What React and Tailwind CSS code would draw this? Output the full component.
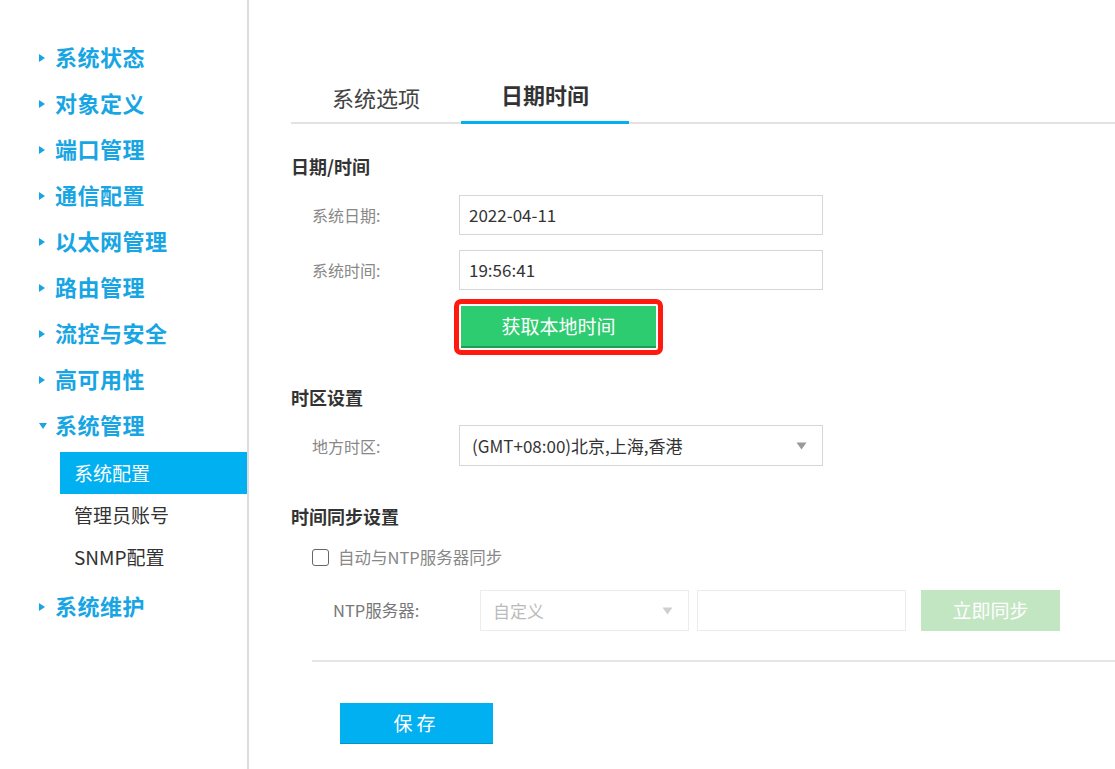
import React from "react";

const FONT = { fontFamily: '"Noto Sans CJK SC", "Noto Sans", sans-serif' };

function Tri({ down }) {
  return down ? (
    <svg width="10" height="8" viewBox="0 0 10 8" className="shrink-0">
      <path d="M1 1 L9 1 L5 7 Z" fill="#18a5e3" />
    </svg>
  ) : (
    <svg width="8" height="10" viewBox="0 0 8 10" className="shrink-0">
      <path d="M1 1 L7 5 L1 9 Z" fill="#18a5e3" />
    </svg>
  );
}

function MenuItem({ label, down }) {
  return (
    <div className="h-[46px] flex items-center pl-[38px]">
      <div className="w-[17px] flex items-center"><Tri down={down} /></div>
      <span className="text-[22px] leading-[26px] pb-[4px] font-bold text-[#18a5e3] tracking-[0.5px]">{label}</span>
    </div>
  );
}

function Arrow({ color }) {
  return (
    <svg width="11" height="8" viewBox="0 0 11 8">
      <path d="M0.5 0.5 L10.5 0.5 L5.5 7.5 Z" fill={color} />
    </svg>
  );
}

export default function App() {
  return (
    <div className="flex w-[1115px] h-[769px] bg-white overflow-hidden" style={FONT}>
      {/* Sidebar */}
      <aside className="w-[249px] shrink-0 border-r-2 border-[#dcdcdc] pt-[35px]">
        <MenuItem label="系统状态" />
        <MenuItem label="对象定义" />
        <MenuItem label="端口管理" />
        <MenuItem label="通信配置" />
        <MenuItem label="以太网管理" />
        <MenuItem label="路由管理" />
        <MenuItem label="流控与安全" />
        <MenuItem label="高可用性" />
        <MenuItem label="系统管理" down />
        <div className="pl-[60px] mt-[3px]">
          <div className="h-[42px] bg-[#00b0f0] flex items-center pl-[14px] text-[19px] text-white">系统配置</div>
          <div className="h-[42px] flex items-center pl-[14px] text-[19px] text-[#333]">管理员账号</div>
          <div className="h-[42px] flex items-center pl-[14px] text-[19px] text-[#333]">SNMP配置</div>
        </div>
        <div className="mt-[6px]">
          <MenuItem label="系统维护" />
        </div>
      </aside>

      {/* Main */}
      <main className="flex-1 pl-[42px]">
        <div className="mt-[72px] h-[52px] flex items-end border-b-2 border-[#e2e2e2]">
          <div className="w-[170px] h-[50px] flex items-center justify-center pb-[4px] text-[22px] text-[#444] -mb-[2px]">系统选项</div>
          <div className="w-[168px] h-[50px] flex items-center justify-center pb-[6px] text-[22px] font-semibold text-[#333] border-b-[3px] border-[#00b0f0] -mb-[2px]">日期时间</div>
        </div>

        <div className="mt-[30px] h-[24px] leading-[24px] text-[18px] font-bold text-[#333]">日期/时间</div>

        <div className="mt-[17px] flex items-center pl-[21px]">
          <div className="w-[147px] text-[16px] text-[#888]">系统日期:</div>
          <div className="w-[364px] h-[40px] border border-[#d6d6d6] flex items-center pl-[9px] text-[17px] text-[#333]">2022-04-11</div>
        </div>
        <div className="mt-[15px] flex items-center pl-[21px]">
          <div className="w-[147px] text-[16px] text-[#888]">系统时间:</div>
          <div className="w-[364px] h-[40px] border border-[#d6d6d6] flex items-center pl-[9px] text-[17px] text-[#333]">19:56:41</div>
        </div>
        <div className="mt-[9px] flex pl-[21px]">
          <div className="w-[142px]" />
          <div className="border-[5px] border-[#ff1a0f] rounded-[7px] p-[2px]">
            <button className="w-[195px] h-[42px] bg-[#2ecc71] border-b-2 border-[#1e9e52] text-white text-[19px] flex items-center justify-center">获取本地时间</button>
          </div>
        </div>

        <div className="mt-[30px] h-[24px] leading-[24px] text-[18px] font-bold text-[#333]">时区设置</div>
        <div className="mt-[16px] flex items-center pl-[21px]">
          <div className="w-[147px] text-[16px] text-[#888]">地方时区:</div>
          <div className="w-[364px] h-[41px] border border-[#d6d6d6] flex items-center justify-between pl-[12px] pr-[15px] text-[17px] text-[#333]">
            <span>(GMT+08:00)北京,上海,香港</span>
            <Arrow color="#9a9a9a" />
          </div>
        </div>

        <div className="mt-[38px] h-[24px] leading-[24px] text-[18px] font-bold text-[#333]">时间同步设置</div>
        <div className="mt-[19px] h-[20px] flex items-center pl-[21px]">
          <div className="w-[17px] h-[17px] border-[1.5px] border-[#666] rounded-[3px] bg-white" />
          <span className="ml-[9px] text-[16.5px] text-[#888]">自动与NTP服务器同步</span>
        </div>
        <div className="mt-[23px] flex items-center pl-[42px]">
          <div className="w-[147px] text-[16.5px] text-[#777]">NTP服务器:</div>
          <div className="w-[209px] h-[41px] border border-[#ececec] flex items-center justify-between pl-[12px] pr-[15px] text-[17px] text-[#bbb]">
            <span>自定义</span>
            <Arrow color="#cfcfcf" />
          </div>
          <div className="ml-[8px] w-[209px] h-[41px] border border-[#ececec]" />
          <div className="ml-[15px] w-[139px] h-[41px] bg-[#c2e6c2] flex items-center justify-center text-[19px] text-white">立即同步</div>
        </div>

        <div className="mt-[29px] ml-[21px] h-[2px] bg-[#e6e6e6]" />

        <button className="mt-[41px] ml-[49px] w-[153px] h-[41px] bg-[#00b0f0] border-b border-[#0a90c4] text-white text-[19px] tracking-[4px] flex items-center justify-center">保存</button>
      </main>
    </div>
  );
}
